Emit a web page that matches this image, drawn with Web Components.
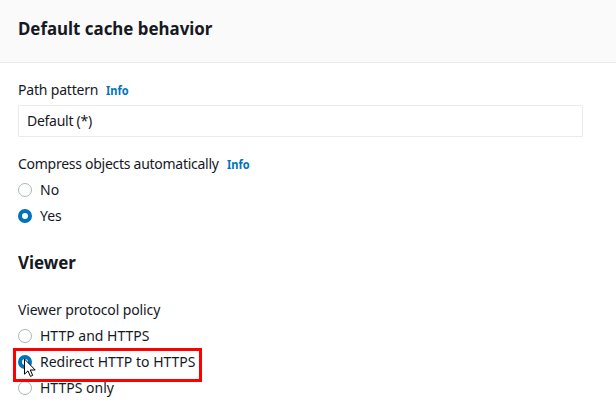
<!DOCTYPE html>
<html lang="en"><head><meta charset="utf-8"><title>Default cache behavior</title>
<style>html,body{margin:0;height:100%;overflow:hidden;background:#fff}</style></head>
<body><cache-panel></cache-panel>
<script>
class InfoLink extends HTMLElement{constructor(){super();this.attachShadow({mode:'open'}).innerHTML=`<style>:host{display:inline-block;margin-left:8px;font-size:12px;font-weight:700;letter-spacing:0;color:#0073bb;transform:scaleX(.92);transform-origin:0 50%}</style><slot></slot>`}}
class RadioOption extends HTMLElement{constructor(){super();this.attachShadow({mode:'open'}).innerHTML=`<style>
:host{display:flex;align-items:center;height:26px;gap:8px;white-space:nowrap}
i{box-sizing:border-box;width:14px;height:14px;border:1px solid #aab7b8;border-radius:50%;background:#fff;flex:none}
:host([checked]) i{border:4px solid #0073bb}</style><i></i><span><slot></slot></span>`}}
class MousePointer extends HTMLElement{constructor(){super();this.attachShadow({mode:'open'}).innerHTML=`<style>:host{display:block}svg{display:block}</style><svg width="13" height="20" viewBox="0 0 13 20"><path d="M.5 1v15.2l3.5-3.3 2.4 5.5 2.3-1-2.4-5.4h4.9z" fill="#fff" stroke="#000"/></svg>`}}
class CachePanel extends HTMLElement{constructor(){super();this.attachShadow({mode:'open'}).innerHTML=`<style>
:host{display:block;position:relative;height:411px;overflow:hidden;font:14px/20px "Noto Sans",sans-serif;color:#16191f}
header{box-sizing:border-box;height:63px;padding:17px 18px;background:#fafafa;border-bottom:1px solid #eaeaea}
h2,h3{margin:0;font-size:18px;line-height:22px;font-weight:700;transform:scaleX(.938);transform-origin:0 50%}
main{padding:17px 18px 0}
.label{height:20px;white-space:nowrap}
.path{letter-spacing:-.19px}.compress{letter-spacing:-.27px}.policy{letter-spacing:-.11px}
.compress,.policy{margin-bottom:3px}
.input{box-sizing:border-box;width:565px;height:32px;border:1px solid #eaeaea;border-radius:1px;padding:5px 8px;margin:5px 0 17px;letter-spacing:-.27px}
h3{margin:22px 0 27px}
.ring{position:absolute;left:13px;top:348px;width:189px;height:34px;box-sizing:border-box;border:3px solid #f00}
mouse-pointer{position:absolute;left:24px;top:358px}
</style><header><h2>Default cache behavior</h2></header><main>
<div class="label path">Path pattern<info-link>Info</info-link></div><div class="input">Default (*)</div>
<div class="label compress">Compress objects automatically<info-link>Info</info-link></div>
<radio-option>No</radio-option><radio-option checked>Yes</radio-option>
<h3>Viewer</h3><div class="label policy">Viewer protocol policy</div>
<radio-option>HTTP and HTTPS</radio-option><radio-option checked>Redirect HTTP to HTTPS</radio-option><radio-option>HTTPS only</radio-option></main><div class="ring"></div><mouse-pointer></mouse-pointer>`}}
customElements.define('info-link',InfoLink);customElements.define('radio-option',RadioOption);customElements.define('mouse-pointer',MousePointer);customElements.define('cache-panel',CachePanel);
</script></body></html>
